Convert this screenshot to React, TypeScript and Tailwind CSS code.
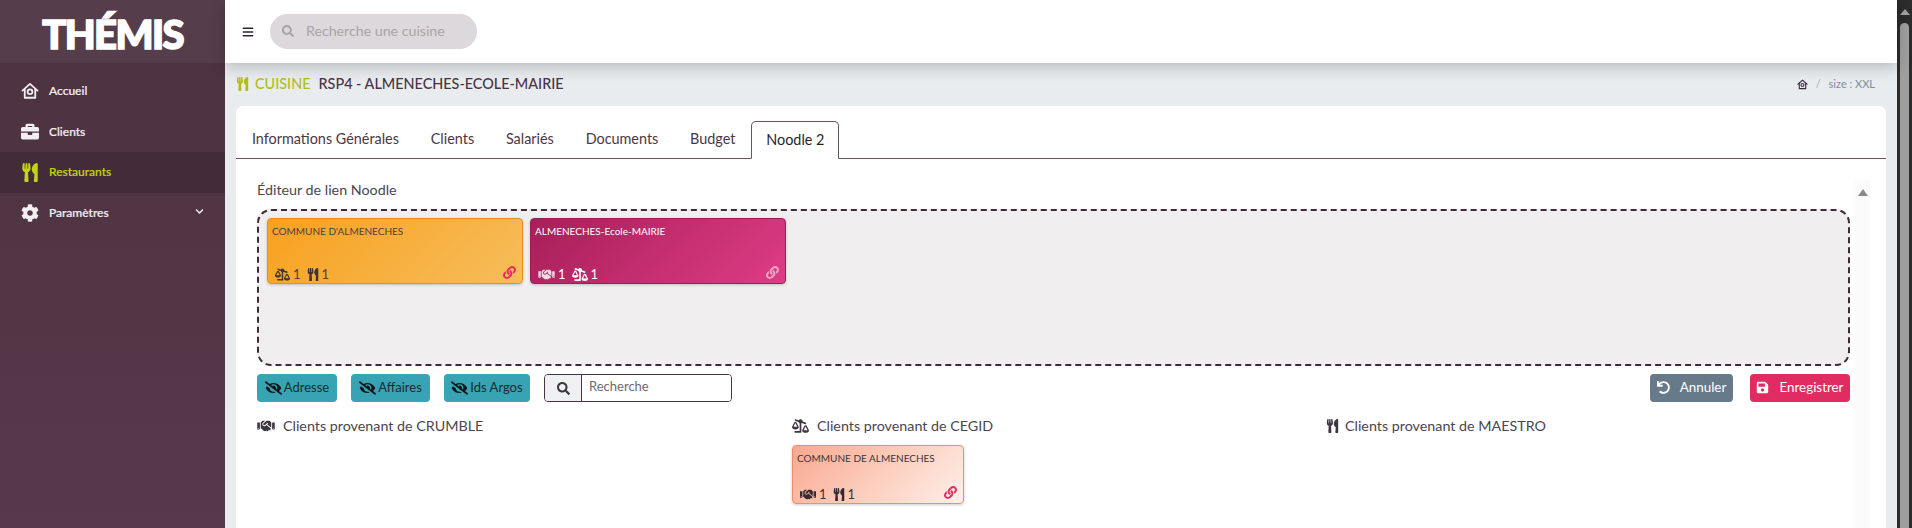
import React from "react";
import { FaUtensils, FaBalanceScaleRight, FaHandshake, FaLink, FaEyeSlash, FaSearch, FaSave, FaUndo, FaCog, FaBriefcase, FaChevronDown, FaBars } from "react-icons/fa";

function HomeIcon({ className }: { className?: string }) {
  return (
    <svg viewBox="0 0 24 24" className={className} fill="none" stroke="currentColor" strokeWidth="2.4" strokeLinejoin="round" strokeLinecap="round">
      <path d="M2 11.5 12 2.5l10 9" />
      <path d="M5 9.5V21h14V9.5" />
      <circle cx="12" cy="13" r="3.2" />
    </svg>
  );
}

const nav = [
  { label: "Accueil", icon: <HomeIcon className="w-[18px] h-[18px]" /> },
  { label: "Clients", icon: <FaBriefcase className="w-[19px] h-[19px]" /> },
  { label: "Restaurants", icon: <FaUtensils className="w-[19px] h-[19px]" />, active: true },
  { label: "Paramètres", icon: <FaCog className="w-[18px] h-[18px]" />, chevron: true },
];

function Counter({ icon, n }: { icon: React.ReactNode; n: number }) {
  return (
    <span className="flex items-center gap-[3px]">
      {icon}
      <span>{n}</span>
    </span>
  );
}

function Card({ title, className, titleClass, linkClass, children }: { title: string; className: string; titleClass: string; linkClass: string; children: React.ReactNode }) {
  return (
    <div className={`relative flex flex-col justify-between rounded-[4px] border shadow-[0_1px_3px_rgba(0,0,0,0.2)] ${className}`}>
      <div className={`pl-[4px] pt-[5px] text-[10px] leading-[14px] ${titleClass}`}>{title}</div>
      <div className={`flex items-center pl-[7px] gap-[6px] text-[13px] leading-[18px] ${titleClass}`}>{children}</div>
      <FaLink className={`absolute right-[6px] bottom-[4px] w-[13px] h-[13px] ${linkClass}`} />
    </div>
  );
}

function ToggleButton({ label, className }: { label: string; className: string }) {
  return (
    <button className={`flex items-center justify-center gap-[2px] h-[28px] pb-[1px] rounded-[4px] bg-[#37a3b3] text-[#1c2b30] text-[13px] ${className}`}>
      <FaEyeSlash className="w-[17px] h-[14px] text-[#10181b]" />
      {label}
    </button>
  );
}

export default function App() {
  return (
    <div className="flex h-[528px] w-[1912px] overflow-hidden bg-[#e8ecef] text-[#4c3241] [font-family:Lato,'Liberation_Sans',sans-serif]">
      <aside className="w-[225px] shrink-0 flex flex-col bg-gradient-to-b from-[#4c3140] to-[#563a4b] text-white">
        <div className="h-[63px] shrink-0 bg-[#563d4c] flex items-center justify-center pt-[5px]">
          <span className="text-[40px] leading-none font-black tracking-[-1.6px] [-webkit-text-stroke:1.6px_white]">THÉMIS</span>
        </div>
        <nav className="pt-[8px] flex flex-col">
          {nav.map((n) => (
            <div key={n.label} className={`relative flex items-center h-[40.6px] pl-[21px] gap-[10px] text-[12px] font-medium [-webkit-text-stroke:0.2px_currentColor] ${n.active ? "bg-[#432b39] text-[#c4d318]" : "text-[#f3eef1]"}`}>
              <span className="w-[18px] flex justify-center">{n.icon}</span>
              <span>{n.label}</span>
              {n.chevron && <FaChevronDown className="absolute right-[21px] top-[14px] w-[9px] h-[9px]" />}
            </div>
          ))}
        </nav>
      </aside>

      <div className="w-[1672px] shrink-0 flex flex-col relative">
        <header className="relative z-10 h-[63px] shrink-0 bg-white flex items-center pl-[17px] gap-[16px] shadow-[0_4px_14px_rgba(0,0,0,0.22)]">
          <FaBars className="w-[12px] h-[12px] text-[#2f2430]" />
          <div className="w-[207px] h-[35px] rounded-full bg-[#dcd8db] flex items-center pl-[12px] gap-[12px] -mt-[1px]">
            <FaSearch className="w-[12px] h-[12px] text-[#a8a2a6]" />
            <span className="text-[14.2px] text-[#a9a4a8]">Recherche une cuisine</span>
          </div>
        </header>

        <div className="h-[43px] shrink-0 flex items-center pl-[11px] pr-[22px] pb-[1px]">
          <FaUtensils className="w-[13px] h-[14px] text-[#b2bd1a]" />
          <span className="ml-[6px] text-[14.4px] font-medium text-[#b2bd1a]">CUISINE</span>
          <span className="ml-[8px] text-[14.4px] font-medium text-[#4a3346]">RSP4 - ALMENECHES-ECOLE-MAIRIE</span>
          <div className="ml-auto flex items-center text-[11px] text-[#7d8a9c]">
            <HomeIcon className="w-[11px] h-[11px] text-[#3a2a3c]" />
            <span className="mx-[8px] text-[#b0a8b0]">/</span>
            <span>size : XXL</span>
          </div>
        </div>

        <main className="ml-[11px] w-[1650px] flex-1 bg-white rounded-t-[7px] flex flex-col">
          <div className="mt-[15px] h-[38px] shrink-0 flex items-end border-b border-[#6b5160] text-[14.4px] text-[#4c3845]">
            {["Informations Générales", "Clients", "Salariés", "Documents", "Budget"].map((t) => (
              <div key={t} className="h-[37px] flex items-center pb-[1px] px-[14.9px] border border-transparent">{t}</div>
            ))}
            <div className="h-[38px] -mb-px flex items-center px-[14px] pb-[1px] bg-white border border-[#6b5160] border-b-white rounded-t-[5px] text-[#2a1f28]">Noodle 2</div>
          </div>

          <div className="relative flex-1 pl-[21px] pr-[36px]">
            <div className="absolute right-[16px] top-[21px] bottom-0 w-[15px] bg-[#fbfbfb] flex justify-center pt-[9px]">
              <div className="w-0 h-0 border-l-[5px] border-r-[5px] border-b-[7px] border-l-transparent border-r-transparent border-b-[#8a8a8a]" />
            </div>
            <div className="pt-[21px] text-[14.3px] leading-[20px] text-[#4a4650]">Éditeur de lien Noodle</div>

            <div className="mt-[9px] h-[157px] rounded-[14px] border-2 border-dashed border-[#412a38] bg-[#f0eeef] pl-[8px] pt-[7px] flex gap-[7px] items-start">
              <Card title="COMMUNE D'ALMENECHES" className="w-[256px] h-[66px] border-[#f08a1c] bg-[linear-gradient(135deg,#f8a11e,#f6bd5b)]" titleClass="text-[#4b4140]" linkClass="text-[#e52d62]">
                <Counter icon={<FaBalanceScaleRight className="w-[15px] h-[13px] text-[#3e3532]" />} n={1} />
                <Counter icon={<FaUtensils className="w-[12px] h-[13px] text-[#3e3532]" />} n={1} />
              </Card>
              <Card title="ALMENECHES-Ecole-MAIRIE" className="w-[256px] h-[66px] border-[#9c1c5c] bg-[linear-gradient(135deg,#a71f58,#de3c85)]" titleClass="text-white" linkClass="text-[#eca6c6]">
                <Counter icon={<FaHandshake className="w-[17px] h-[13px] text-[#efd9e3]" />} n={1} />
                <Counter icon={<FaBalanceScaleRight className="w-[16px] h-[13px] text-white" />} n={1} />
              </Card>
            </div>

            <div className="mt-[8px] flex items-center">
              <ToggleButton label="Adresse" className="w-[80px]" />
              <ToggleButton label="Affaires" className="w-[79px] ml-[14px]" />
              <ToggleButton label="Ids Argos" className="w-[86px] ml-[14px]" />
              <div className="ml-[14px] w-[188px] h-[28px] flex rounded-[4px] border border-[#4c3241] overflow-hidden">
                <div className="w-[37px] bg-[#eef0f2] border-r border-[#4c3241] flex items-center justify-center">
                  <FaSearch className="w-[13px] h-[13px] text-[#3d3540]" />
                </div>
                <div className="flex-1 bg-white pl-[7px] text-[13px] leading-[23px] text-[#6f6a6e]">Recherche</div>
              </div>
              <button className="ml-auto w-[83px] h-[28px] pb-[2px] rounded-[4px] bg-[#667a8a] text-white text-[13.4px] flex items-center justify-center gap-[10px]">
                <FaUndo className="w-[13px] h-[13px]" />
                Annuler
              </button>
              <button className="ml-[17px] w-[100px] h-[28px] pb-[2px] rounded-[4px] bg-[#e02c60] text-white text-[13.4px] flex items-center justify-center gap-[10px]">
                <FaSave className="w-[13px] h-[13px]" />
                Enregistrer
              </button>
            </div>

            <div className="mt-[14px] grid grid-cols-[535px_534px_1fr]">
              <div className="flex items-center gap-[8px] h-[20px] text-[14.3px] text-[#4a4650]">
                <FaHandshake className="w-[18px] h-[14px] text-[#3d3540]" />
                Clients provenant de CRUMBLE
              </div>
              <div>
                <div className="flex items-center gap-[8px] h-[20px] text-[14.3px] text-[#4a4650]">
                  <FaBalanceScaleRight className="w-[17px] h-[14px] text-[#3d3540]" />
                  Clients provenant de CEGID
                </div>
                <div className="mt-[9px]">
                  <Card title="COMMUNE DE ALMENECHES" className="w-[172px] h-[59px] border-[#f58a6c] bg-[linear-gradient(135deg,#f9a98f,#fef0e9)]" titleClass="text-[#3f3338]" linkClass="text-[#e52d62]">
                    <Counter icon={<FaHandshake className="w-[16px] h-[13px] text-[#352b30]" />} n={1} />
                    <Counter icon={<FaUtensils className="w-[12px] h-[13px] text-[#352b30]" />} n={1} />
                  </Card>
                </div>
              </div>
              <div className="flex items-center gap-[6px] h-[20px] text-[14.3px] text-[#4a4650]">
                <FaUtensils className="w-[13px] h-[14px] text-[#3d3540]" />
                Clients provenant de MAESTRO
              </div>
            </div>
          </div>
        </main>
      </div>

      <div className="w-[15px] shrink-0 bg-[#2c2c2c] flex flex-col items-center">
        <div className="mt-[9px] w-0 h-0 border-l-[5px] border-r-[5px] border-b-[6px] border-l-transparent border-r-transparent border-b-[#a3a3a3]" />
        <div className="mt-[8px] w-[9px] flex-1 rounded-t-full bg-[#9f9f9f]" />
      </div>
    </div>
  );
}
